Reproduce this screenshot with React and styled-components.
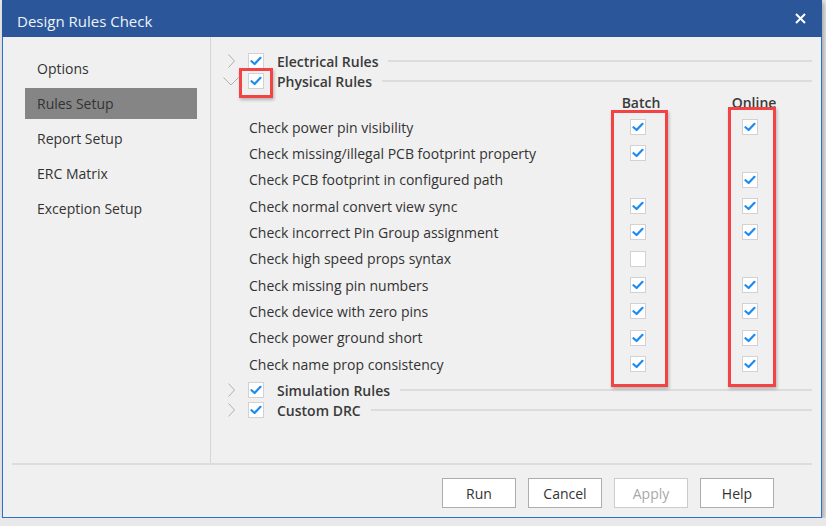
import React from "react";
import styled, { createGlobalStyle } from "styled-components";

const GlobalStyle = createGlobalStyle`
  html, body {
    margin: 0;
    padding: 0;
    background: #e9e9e9;
    font-family: "Open Sans", "Noto Sans", sans-serif;
    color: #333;
  }
`;

const Window = styled.div`
  margin-left: 2px;
  width: 820px;
  height: 518px;
  display: flex;
  flex-direction: column;
  background: #f0f0f0;
  box-shadow: 2px 2px 5px rgba(0, 0, 0, 0.3);
  box-sizing: border-box;
`;

const TitleBar = styled.div`
  height: 37px;
  flex: none;
  background: #2b579a;
  display: flex;
  justify-content: space-between;
  padding: 0 16px 0 15px;
  color: #eef2f8;
  font-size: 15px;
`;

const Title = styled.span`
  padding-top: 11px;
`;

const CloseWrap = styled.span`
  padding-top: 8px;
`;

const Body = styled.div`
  flex: 1;
  display: flex;
  flex-direction: column;
  border: 1px solid #2a6fd1;
  border-top: none;
  padding: 0 9px 0 9px;
`;

const Main = styled.div`
  height: 426px;
  display: flex;
  border-bottom: 2px solid #dcdcdc;
`;

const Nav = styled.div`
  width: 199px;
  flex: none;
  border-right: 1px solid #d6d6d6;
  padding-top: 16px;
  box-sizing: border-box;
`;

const NavItem = styled.div`
  margin: 0 13px 4px 13px;
  height: 31px;
  line-height: 31px;
  padding-left: 12px;
  font-size: 14px;
  color: #333;
  background: ${(p) => (p.$active ? "#858585" : "transparent")};
`;

const Content = styled.div`
  flex: 1;
  padding-top: 14px;
`;

const GroupRow = styled.div`
  height: 20px;
  display: flex;
  align-items: center;
  padding-left: 12px;
`;

const Chevron = styled.span`
  width: 16px;
  height: 16px;
  display: flex;
  align-items: center;
  justify-content: center;
  margin-right: 9px;
`;

const GroupTitle = styled.span`
  margin-left: 13px;
  font-size: 14px;
  font-weight: 600;
  color: #3a3a3a;
`;

const Rule = styled.span`
  flex: 1;
  height: 2px;
  background: #dcdcdc;
  margin-left: 10px;
`;

const Box = styled.span`
  position: relative;
  width: 16px;
  height: 16px;
  flex: none;
  box-sizing: border-box;
  border: 1px solid #d2d2d2;
  background: #fff;
  display: inline-flex;
  align-items: center;
  justify-content: center;
`;

const Highlight = styled.span`
  position: absolute;
  left: ${(p) => p.$left}px;
  top: ${(p) => p.$top}px;
  width: ${(p) => p.$width}px;
  height: ${(p) => p.$height}px;
  box-sizing: border-box;
  border: 3px solid #f24444;
  box-shadow: 1px 2px 3px rgba(0, 0, 0, 0.25);
  pointer-events: none;
`;

const Table = styled.div`
  position: relative;
  padding-left: 38px;
  margin-bottom: 3px;
`;

const Grid = styled.div`
  display: grid;
  grid-template-columns: 359px 60px 52px 60px;
  grid-template-rows: 23px;
  grid-auto-rows: 26.33px;
`;

const HeadCell = styled.div`
  display: flex;
  align-items: center;
  justify-content: center;
  padding-left: ${(p) => p.$shift}px;
  font-size: 14px;
  font-weight: 600;
  color: #3a3a3a;
  grid-column: ${(p) => p.$col};
`;

const Label = styled.div`
  display: flex;
  align-items: center;
  font-size: 14px;
  color: #333;
`;

const Cell = styled.div`
  display: flex;
  align-items: center;
  justify-content: center;
  grid-column: ${(p) => p.$col};
`;

const Footer = styled.div`
  flex: 1;
  display: flex;
  justify-content: flex-end;
  align-items: flex-start;
  gap: 12px;
  padding: 13px 38px 0 0;
`;

const Button = styled.button`
  width: 74px;
  height: 30px;
  background: #fff;
  border: 1px solid ${(p) => (p.disabled ? "#cccccc" : "#adadad")};
  color: ${(p) => (p.disabled ? "#a8a8a8" : "#333")};
  font-family: "Open Sans", "Noto Sans", sans-serif;
  font-size: 14px;
  padding: 0;
`;

const Tick = () => (
  <svg width="12" height="10" viewBox="0 0 12 10">
    <path d="M1.5 5.2 L4.6 8 L10.5 1.8" fill="none" stroke="#1a8cf0" strokeWidth="2.2" strokeLinecap="round" strokeLinejoin="round" />
  </svg>
);

const Check = ({ on, children }) => (
  <Box>
    {on && <Tick />}
    {children}
  </Box>
);

const ChevronIcon = ({ open }) => (
  <Chevron>
    {open ? (
      <svg width="16" height="9" viewBox="0 0 16 9">
        <polyline points="0.5,0.5 8,8 15.5,0.5" fill="none" stroke="#b0b0b0" strokeWidth="1" />
      </svg>
    ) : (
      <svg width="7" height="14" viewBox="0 0 7 14">
        <polyline points="0.5,0.5 6.5,7 0.5,13.5" fill="none" stroke="#b0b0b0" strokeWidth="1" />
      </svg>
    )}
  </Chevron>
);

const Close = () => (
  <svg width="11" height="11" viewBox="0 0 11 11">
    <path d="M1 1 L10 10 M10 1 L1 10" stroke="#fff" strokeWidth="2" />
  </svg>
);

const navItems = ["Options", "Rules Setup", "Report Setup", "ERC Matrix", "Exception Setup"];

const rules = [
  ["Check power pin visibility", "on", "on"],
  ["Check missing/illegal PCB footprint property", "on", null],
  ["Check PCB footprint in configured path", null, "on"],
  ["Check normal convert view sync", "on", "on"],
  ["Check incorrect Pin Group assignment", "on", "on"],
  ["Check high speed props syntax", "off", null],
  ["Check missing pin numbers", "on", "on"],
  ["Check device with zero pins", "on", "on"],
  ["Check power ground short", "on", "on"],
  ["Check name prop consistency", "on", "on"],
];

function Group({ title, open, children }) {
  return (
    <GroupRow>
      <ChevronIcon open={open} />
      <Check on>{children}</Check>
      <GroupTitle>{title}</GroupTitle>
      <Rule />
    </GroupRow>
  );
}

export default function App() {
  return (
    <>
      <GlobalStyle />
      <Window>
        <TitleBar>
          <Title>Design Rules Check</Title>
          <CloseWrap>
            <Close />
          </CloseWrap>
        </TitleBar>
        <Body>
          <Main>
            <Nav>
              {navItems.map((item) => (
                <NavItem key={item} $active={item === "Rules Setup"}>
                  {item}
                </NavItem>
              ))}
            </Nav>
            <Content>
              <Group title="Electrical Rules" />
              <Group title="Physical Rules" open>
                <Highlight $left={-10} $top={-6} $width={34} $height={30} />
              </Group>
              <Table>
                <Grid>
                  <HeadCell $col={2} $shift={6}>Batch</HeadCell>
                  <HeadCell $col={4} $shift={8}>Online</HeadCell>
                  {rules.map(([label, batch, online]) => (
                    <React.Fragment key={label}>
                      <Label>{label}</Label>
                      <Cell $col={2}>{batch && <Check on={batch === "on"} />}</Cell>
                      <Cell $col={4}>{online && <Check on={online === "on"} />}</Cell>
                    </React.Fragment>
                  ))}
                </Grid>
                <Highlight $left={400} $top={19} $width={57} $height={277} />
                <Highlight $left={517} $top={16} $width={48} $height={280} />
              </Table>
              <Group title="Simulation Rules" />
              <Group title="Custom DRC" />
            </Content>
          </Main>
          <Footer>
            <Button>Run</Button>
            <Button>Cancel</Button>
            <Button disabled>Apply</Button>
            <Button>Help</Button>
          </Footer>
        </Body>
      </Window>
    </>
  );
}
